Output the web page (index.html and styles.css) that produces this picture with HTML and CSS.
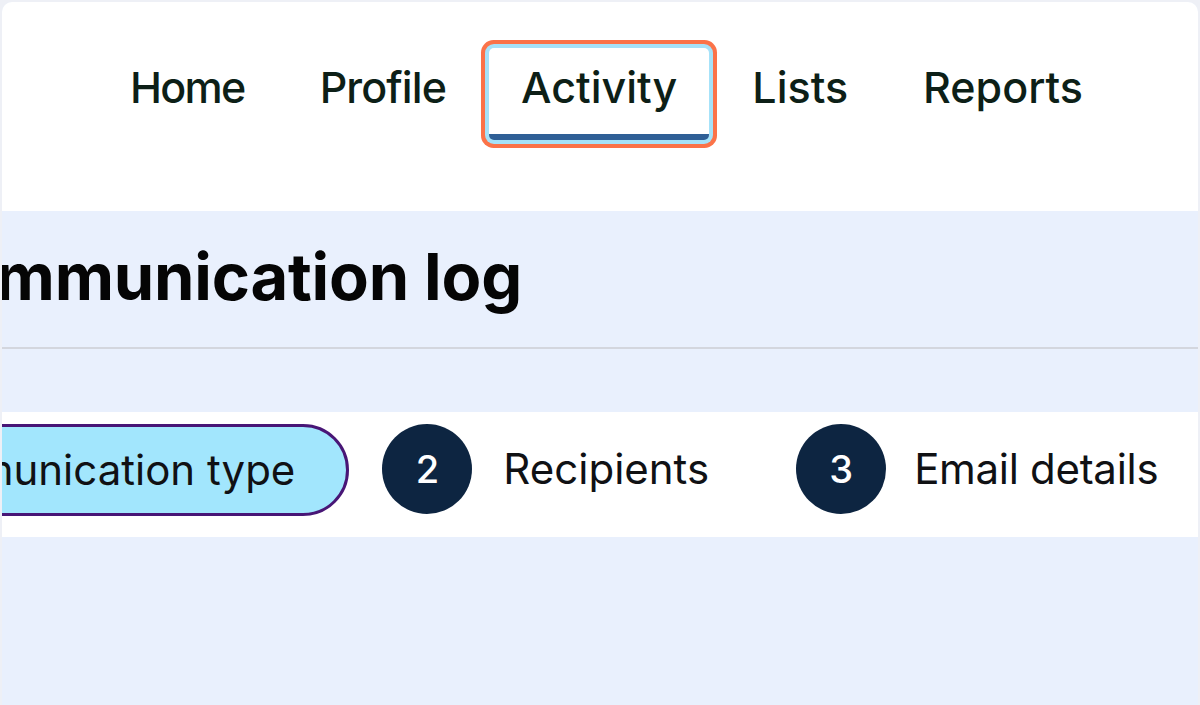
FILE: index.html
```html
<!DOCTYPE html>
<html lang="en">
<head>
<meta charset="utf-8">
<title>Communication log</title>
<link rel="stylesheet" href="styles.css">
</head>
<body>
<div class="frame">
  <div class="panel">
    <header class="header">
      <nav class="nav">
        <a class="nav-item nav-home" href="#">Home</a>
        <a class="nav-item nav-profile" href="#">Profile</a>
        <a class="nav-item active" href="#">Activity</a>
        <a class="nav-item" href="#">Lists</a>
        <a class="nav-item" href="#">Reports</a>
      </nav>
    </header>
    <main class="main">
      <div class="title-block">
        <h1 class="title">Communication log</h1>
      </div>
      <div class="steps">
        <div class="step step-current">
          <span class="step-label">Communication type</span>
        </div>
        <div class="step step-recipients">
          <span class="step-num">2</span>
          <span class="step-label">Recipients</span>
        </div>
        <div class="step step-email">
          <span class="step-num">3</span>
          <span class="step-label">Email details</span>
        </div>
      </div>
    </main>
  </div>
</div>
</body>
</html>
```
FILE: styles.css
```css
* { box-sizing: border-box; }
html, body { margin: 0; padding: 0; }
body {
  width: 1200px;
  height: 705px;
  overflow: hidden;
  background: #eef0f6;
  font-family: Inter, "Noto Sans", "Liberation Sans", sans-serif;
}
.frame {
  height: 705px;
  padding: 2px 2px 0 2px;
}
.panel {
  height: 703px;
  background: #e9f0fd;
  border-radius: 10px 10px 0 0;
  overflow: hidden;
  display: flex;
  flex-direction: column;
}
.header {
  background: #ffffff;
  height: 209px;
  flex: none;
  padding: 46px 0 0 96px;
}
.nav {
  display: flex;
  gap: 11px;
}
.nav-item {
  display: block;
  height: 92px;
  padding: 13px 32px 0;
  font-size: 43px;
  font-weight: 500;
  line-height: 52px;
  color: #0d1f17;
  text-decoration: none;
  border-bottom: 6px solid transparent;
  border-radius: 6px;
}
.nav-home {
  letter-spacing: -1.7px;
}
.nav-profile {
  letter-spacing: -0.9px;
}
.nav-item.active {
  background: #ffffff;
  border-bottom-color: #2f5f96;
  box-shadow: 0 0 0 4px #a6e2f9, 0 0 0 8px #fb7349;
  border-radius: 5px;
}
.main {
  flex: 1;
  overflow: hidden;
}
.title-block {
  padding: 27px 0 32px;
  border-bottom: 2px solid #d3d6de;
  overflow: hidden;
}
.title {
  margin: 0 0 0 -94px;
  font-size: 65px;
  font-weight: 700;
  line-height: 77px;
  color: #050505;
  white-space: nowrap;
  letter-spacing: -0.2px;
}
.steps {
  margin-top: 63px;
  background: #ffffff;
  height: 125px;
  padding: 12px 0 0;
  display: flex;
  align-items: flex-start;
  overflow: hidden;
}
.step {
  display: flex;
  align-items: center;
  flex: none;
  height: 90px;
  gap: 31px;
}
.step-email {
  gap: 28px;
}
.step-label {
  font-size: 42px;
  font-weight: 400;
  color: #101114;
  white-space: nowrap;
  line-height: 52px;
}
.step-email .step-label {
  letter-spacing: -0.3px;
}
.step-current {
  height: 92px;
  margin-left: -161px;
  margin-right: 33px;
  padding: 0 51px 0 40px;
  background: #a2e6fd;
  border: 3px solid #481676;
  border-radius: 46px;
}
.step-recipients {
  margin-right: 87px;
}
.step-num {
  width: 90px;
  height: 90px;
  border-radius: 50%;
  background: #0d2541;
  color: #ffffff;
  font-size: 38px;
  font-weight: 500;
  display: flex;
  align-items: center;
  justify-content: center;
  flex: none;
}
```
